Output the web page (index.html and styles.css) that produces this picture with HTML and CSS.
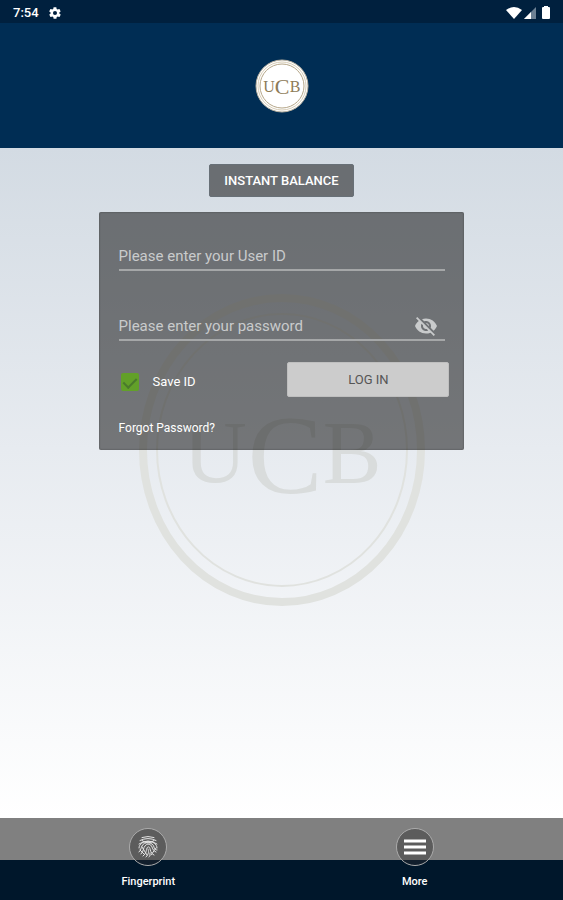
FILE: index.html
```html
<!DOCTYPE html>
<html lang="en">
<head>
  <meta charset="UTF-8">
  <meta name="viewport" content="width=device-width, initial-scale=1.0">
  <title>UCB Mobile Banking</title>
  <link rel="stylesheet" href="styles.css">
</head>
<body>

  <div class="status-bar">
    <span class="time">7:54</span>
    <svg class="gear" viewBox="0 0 24 24" width="14" height="14" aria-hidden="true">
      <path fill="#fff" fill-rule="evenodd" d="M19.4 13a7.500 7.500 0 0 0 0-2l2.100-1.600a.5.5 0 0 0 .1-.6l-2-3.500a.5.5 0 0 0-.6-.2l-2.500 1a7.300 7.300 0 0 0-1.700-1l-.4-2.700a.5.5 0 0 0-.5-.4h-4a.5.5 0 0 0-.5.4L9 5.100a7.700 7.700 0 0 0-1.700 1l-2.500-1a.5.5 0 0 0-.6.2l-2 3.500a.5.5 0 0 0 .1.6L4.500 11a8 8 0 0 0 0 2l-2.100 1.600a.5.5 0 0 0-.1.6l2 3.500c.1.200.4.300.6.200l2.500-1a7.300 7.300 0 0 0 1.700 1l.4 2.700c0 .2.200.4.500.4h4c.3 0 .5-.2.500-.4l.4-2.700a7.700 7.700 0 0 0 1.700-1l2.500 1c.2.100.5 0 .6-.2l2-3.500a.5.5 0 0 0-.1-.6zM12 15.500a3.500 3.500 0 1 1 0-7 3.500 3.500 0 0 1 0 7z"/>
    </svg>
    <div class="status-icons">
      <svg viewBox="0 0 16 12" width="16" height="12" aria-hidden="true">
        <path fill="#fff" d="M0 3Q8-3 16 3L8 12z"/>
      </svg>
      <svg viewBox="0 0 12 12" width="12" height="12" aria-hidden="true">
        <path fill="#6c8093" d="M12 0v12H0z"/>
        <path fill="#fff" d="M7 5v7H0z"/>
      </svg>
      <svg class="battery" viewBox="0 0 8 13" width="8" height="13" aria-hidden="true">
        <path fill="#fff" d="M2 0h4v1h1q1 0 1 1v10q0 1-1 1H1q-1 0-1-1V2q0-1 1-1h1z"/>
      </svg>
    </div>
  </div>

  <header>
    <svg class="logo" viewBox="0 0 54 54" width="54" height="54" role="img" aria-label="UCB">
      <circle cx="27" cy="27" r="26" fill="#fff" stroke="#b9b1a0" stroke-width="1"/>
      <circle cx="27" cy="27" r="24" fill="none" stroke="#d8cdb6" stroke-width="1"/>
      <circle cx="27" cy="27" r="22" fill="none" stroke="#b5a688" stroke-width="1"/>
      <g class="logo-text">
        <text x="14" y="33" font-size="16">U</text>
        <text x="27" y="35" font-size="22">C</text>
        <text x="40" y="33" font-size="16">B</text>
      </g>
    </svg>
  </header>

  <main>
    <svg class="watermark" viewBox="0 0 286 312" width="286" height="312" aria-hidden="true">
      <ellipse cx="143" cy="156" rx="139" ry="152" fill="none" stroke-width="8"/>
      <ellipse cx="143" cy="156" rx="125" ry="136" fill="none" stroke-width="2"/>
      <g class="watermark-text">
        <text x="76" y="188" font-size="88">U</text>
        <text x="146" y="199" font-size="112">C</text>
        <text x="213" y="188" font-size="88">B</text>
      </g>
    </svg>

    <button class="balance-btn" type="button">INSTANT BALANCE</button>

    <form class="login">
      <div class="field">
        <input type="text" placeholder="Please enter your User ID" aria-label="User ID">
      </div>
      <div class="field">
        <input type="password" placeholder="Please enter your password" aria-label="Password">
        <button class="eye-btn" type="button" aria-label="Show password">
          <svg viewBox="0 0 24 24" width="24" height="24" aria-hidden="true">
            <path fill="#c9cbcc" d="M12 7c2.760 0 5 2.240 5 5 0 .65-.13 1.260-.36 1.830l2.920 2.920c1.510-1.260 2.700-2.890 3.430-4.750-1.730-4.390-6-7.500-11-7.500-1.400 0-2.740.25-3.980.7l2.160 2.160C10.740 7.130 11.350 7 12 7zM2 4.270l2.280 2.280.46.46C3.080 8.300 1.780 10.020 1 12c1.730 4.390 6 7.500 11 7.500 1.550 0 3.030-.3 4.380-.84l.42.42L19.730 22 21 20.730 3.270 3 2 4.270zM7.530 9.800l1.550 1.550c-.05.21-.08.43-.08.65 0 1.660 1.340 3 3 3 .22 0 .44-.03.65-.08l1.550 1.550c-.67.33-1.410.53-2.200.53-2.760 0-5-2.240-5-5 0-.79.2-1.530.53-2.200zm4.310-.78l3.150 3.150.02-.16c0-1.660-1.340-3-3-3l-.17.01z"/>
          </svg>
        </button>
      </div>
      <div class="actions">
        <label class="save"><input type="checkbox" checked>Save ID</label>
        <button class="login-btn" type="submit">LOG IN</button>
      </div>
      <a class="forgot" href="#">Forgot Password?</a>
    </form>
  </main>

  <nav>
    <a href="#">
      <span class="nav-icon">
        <svg viewBox="0 0 24 24" width="24" height="24" fill="none" stroke="#e4e4e4" stroke-width="1" stroke-linecap="round" aria-hidden="true">
          <path d="M6 2.500q6-2 12 0M4 5.500q8-4 16 0M6 5.500q6 5 12 0M3 9q9-6 18 0M3 13c0-9 18-9 18 0M3 17c2-2 2-4 3-6 2-5 11-4 12 1 0 2 2 3 3 3M5 19c3-3 2-6 4-8 2-3 6-2 7 1 1 3 2 4 4 5M7 21c4-3 3-6 4-8 1-2 3-1 3 1 1 4 2 5 4 6M10 22c3-3 3-6 2-8M13 22c1-1 1-2 1-4M4 15l4 4M6 12l5 8M20 13l-5 7"/>
        </svg>
      </span>
      Fingerprint
    </a>
    <a href="#">
      <span class="nav-icon">
        <svg viewBox="0 0 24 24" width="24" height="24" aria-hidden="true">
          <path stroke="#fff" stroke-width="3" d="M1 6h22M1 12h22M1 18h22"/>
        </svg>
      </span>
      More
    </a>
  </nav>

</body>
</html>
```
FILE: styles.css
```css
* {
  box-sizing: border-box;
}

body {
  display: flex;
  flex-direction: column;
  min-height: 100vh;
  margin: 0;
  font-family: Roboto, Arial, sans-serif;
  color: #fff;
}

button,
input {
  font-family: inherit;
}

a {
  color: inherit;
  text-decoration: none;
}

.status-bar {
  display: flex;
  align-items: center;
  gap: 9px;
  height: 23px;
  padding: 2px 13px 0 13px;
  background: #00203e;
}

.time {
  font-size: 13px;
  font-weight: 500;
}

.status-icons {
  display: flex;
  align-items: center;
  gap: 2px;
  margin-left: auto;
}

.battery {
  margin-left: 4px;
}

header {
  display: flex;
  align-items: center;
  justify-content: center;
  height: 125px;
  background: #002d54;
}

.logo-text,
.watermark-text {
  font-family: "Liberation Serif", "Times New Roman", serif;
  text-anchor: middle;
}

.logo-text {
  fill: #8d7b58;
}

main {
  position: relative;
  display: flex;
  flex: 1;
  flex-direction: column;
  align-items: center;
  gap: 15px;
  padding: 16px 0;
  background: linear-gradient(#d3dbe3, #e7ebf0 45%, #fff);
}

.watermark {
  position: absolute;
  top: 146px;
  left: 50%;
  transform: translateX(-50%);
  stroke: #e0e2df;
}

.watermark-text {
  fill: #d9dcdc;
  stroke: none;
}

.balance-btn {
  position: relative;
  height: 33px;
  padding: 0 14px;
  border: 1px solid #687077;
  border-radius: 2px;
  background: rgba(0, 0, 0, 0.5);
  color: #fff;
  font-size: 13px;
  font-weight: 500;
}

.login {
  position: relative;
  width: 65%;
  padding: 25px 15px 13px 20px;
  border-radius: 2px;
  background: rgba(0, 0, 0, 0.5);
  box-shadow: inset 0 0 2px rgba(0, 0, 0, 0.4);
}

.field {
  display: flex;
  align-items: center;
  height: 34px;
  margin: 0 4px 36px 0;
  padding-top: 6px;
  border-bottom: 2px solid #a5a7a8;
}

.field input {
  flex: 1;
  min-width: 0;
  padding: 0;
  border: 0;
  outline: 0;
  background: none;
  color: #fff;
  font-size: 15px;
}

.field input::placeholder {
  color: #c9cbcc;
}

.eye-btn {
  display: flex;
  padding: 0 7px;
  border: 0;
  background: none;
}

.actions {
  display: flex;
  align-items: center;
  justify-content: space-between;
  margin-top: -15px;
}

.save {
  display: flex;
  align-items: center;
  gap: 14px;
  padding: 4px 0 0 2px;
  font-size: 13px;
}

.save input {
  display: flex;
  justify-content: center;
  width: 18px;
  height: 18px;
  margin: 0;
  border-radius: 2px;
  appearance: none;
  background: #62a029;
}

.save input:checked::before {
  content: "";
  width: 6px;
  height: 11px;
  margin-top: 2px;
  border: solid #4a7a2c;
  border-width: 0 2px 2px 0;
  transform: rotate(45deg);
}

.login-btn {
  width: 49%;
  height: 35px;
  border: 1px solid #bfbfbf;
  border-radius: 2px;
  background: #ccc;
  color: #555;
  font-size: 13px;
}

.forgot {
  display: inline-block;
  margin-top: 22px;
  font-size: 12px;
  line-height: 18px;
}

nav {
  display: flex;
  height: 82px;
  padding: 10px 15px 0;
  background: linear-gradient(#808080 42px, #00172b 42px);
}

nav a {
  display: flex;
  flex: 1;
  flex-direction: column;
  align-items: center;
  gap: 9px;
  font-size: 11px;
  font-weight: 500;
}

.nav-icon {
  display: flex;
  align-items: center;
  justify-content: center;
  width: 38px;
  height: 38px;
  border: 1px solid #aaa;
  border-radius: 50%;
  background: linear-gradient(#5c5c5c 31px, #111e2c 31px);
}
```
